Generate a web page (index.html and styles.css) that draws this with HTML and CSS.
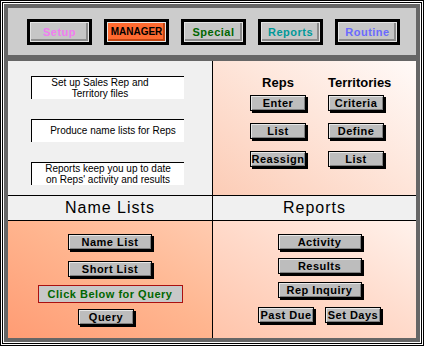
FILE: index.html
```html
<!DOCTYPE html>
<html lang="en">
<head>
  <meta charset="UTF-8">
  <title>Sales Manager</title>
  <link rel="stylesheet" href="styles.css">
</head>
<body>
  <div class="window">
    <div class="frame">
      <div class="panel">
        <div class="toolbar">
          <a class="nav-btn setup"><span>Setup</span></a>
          <a class="nav-btn manager"><span>MANAGER</span></a>
          <a class="nav-btn special"><span>Special</span></a>
          <a class="nav-btn reports"><span>Reports</span></a>
          <a class="nav-btn routine"><span>Routine</span></a>
        </div>

        <div class="content">
          <div class="cell intro">
            <div class="note note1">Set up Sales Rep and<br>Territory files</div>
            <div class="note note2">Produce name lists for Reps</div>
            <div class="note note3">Reports keep you up to date<br>on Reps' activity and results</div>
          </div>

          <div class="cell reps">
            <div class="reps-head">
              <span>Reps</span>
              <span>Territories</span>
            </div>
            <div class="reps-grid">
              <button class="btn">Enter</button>
              <button class="btn">Criteria</button>
              <button class="btn">List</button>
              <button class="btn">Define</button>
              <button class="btn">Reassign</button>
              <button class="btn">List</button>
            </div>
          </div>

          <div class="cell head">Name Lists</div>
          <div class="cell head">Reports</div>

          <div class="cell names">
            <button class="btn wide">Name List</button>
            <button class="btn wide">Short List</button>
            <div class="query-label">Click Below for Query</div>
            <button class="btn query">Query</button>
          </div>

          <div class="cell report-list">
            <button class="btn wide">Activity</button>
            <button class="btn wide">Results</button>
            <button class="btn wide">Rep Inquiry</button>
            <div class="pair">
              <button class="btn">Past Due</button>
              <button class="btn">Set Days</button>
            </div>
          </div>
        </div>
      </div>
    </div>
  </div>
</body>
</html>
```

FILE: styles.css
```css
*{
  margin: 0;
  padding: 0;
  box-sizing: border-box;
}
body{
  background: #fff;
  font-family: "Liberation Sans", Arial, sans-serif;
}
.window{
  width: 424px;
  height: 346px;
  border: 1px solid #000;
  padding: 1px;
  background: #fff;
}
.frame{
  height: 100%;
  border: 1px solid #000;
  padding: 1px;
  background: #fff;
}
.panel{
  height: 100%;
  border: 4px solid #666;
  background: #666;
  display: flex;
  flex-direction: column;
}
.toolbar{
  height: 47px;
  margin-bottom: 6px;
  background: #ccc;
  display: flex;
  align-items: center;
  gap: 12px;
  padding-left: 19px;
}
.nav-btn{
  width: 65px;
  height: 26px;
  border: 3px solid #000;
  padding: 1px;
  background: #e4e4e4;
  display: block;
}
.nav-btn span{
  display: flex;
  align-items: center;
  justify-content: center;
  height: 100%;
  background: #c6c6c6;
  box-shadow: inset -2px -2px 0 #8c8c8c;
  font-size: 11px;
  font-weight: bold;
  letter-spacing: 0.5px;
}
.setup span{ color: #f07cf0; }
.special span{ color: #006600; }
.reports span{ color: #009999; }
.routine span{ color: #6a6aff; }
.manager span{
  background: #ff6a30;
  box-shadow: inset -2px -2px 0 #c24410;
  color: #000;
  font-size: 10px;
  letter-spacing: 0;
}

.content{
  flex: 1;
  display: grid;
  grid-template-columns: 204px 203px;
  grid-template-rows: 134px 24px 1fr;
  gap: 1px;
  background: #000;
}
.cell{
  min-height: 0;
}

/* top left: notes */
.intro{
  background: #f0f0f0;
  padding: 15px 0 0 23px;
  display: flex;
  flex-direction: column;
  gap: 20px;
}
.note{
  width: 153px;
  height: 23px;
  border-top: 1px solid #000;
  border-left: 1px solid #000;
  background: #fff;
  font-size: 10px;
  line-height: 11px;
  text-align: center;
  color: #000;
}
.note1{ padding-right: 16px; }
.note2{ padding: 5px 0 0 10px; }

/* top right: reps and territories */
.reps{
  background: linear-gradient(35deg, #fcccb6 0%, #fee6db 55%, #fffaf8 100%);
  padding: 14px 0 0 37px;
}
.reps-head{
  display: flex;
  gap: 22px;
  margin-bottom: 5px;
}
.reps-head span{
  width: 56px;
  text-align: center;
  white-space: nowrap;
  font-size: 13px;
  line-height: 15px;
  font-weight: bold;
}
.reps-grid{
  display: grid;
  grid-template-columns: 56px 56px;
  column-gap: 22px;
  row-gap: 12px;
}

.btn{
  height: 16px;
  width: 56px;
  border: 1px solid #000;
  background: #bdbdbd;
  box-shadow: 2px 2px 0 #000, inset 1px 1px 0 #e8e8e8, inset -1px -1px 0 #808080;
  font-family: "Liberation Sans", Arial, sans-serif;
  font-size: 11px;
  font-weight: bold;
  letter-spacing: 0.5px;
  line-height: 14px;
  color: #000;
  text-align: center;
  white-space: nowrap;
}
.btn.wide{
  width: 84px;
}

/* header row */
.head{
  background: #f0f0f0;
  text-align: center;
  font-size: 16px;
  line-height: 24px;
  letter-spacing: 1px;
}

/* bottom left: name lists */
.names{
  background: linear-gradient(30deg, #ff9c74 0%, #ffb690 55%, #ffcbb0 100%);
  padding-top: 13px;
  display: flex;
  flex-direction: column;
  align-items: center;
}
.names .btn + .btn{
  margin-top: 11px;
}
.query-label{
  margin-top: 8px;
  width: 145px;
  height: 18px;
  border: 1px solid #aa1010;
  background: #c8c8c8;
  color: #006600;
  font-size: 11px;
  font-weight: bold;
  letter-spacing: 0.5px;
  line-height: 16px;
  text-align: center;
}
.btn.query{
  margin-top: 6px;
  margin-right: 8px;
}

/* bottom right: reports */
.report-list{
  background: linear-gradient(30deg, #ffc4aa 0%, #ffdccd 55%, #fff2ec 100%);
  padding: 13px 0 0 10px;
  display: flex;
  flex-direction: column;
  align-items: center;
  gap: 8px;
}
.pair{
  display: flex;
  gap: 11px;
  margin-top: 1px;
}
```
